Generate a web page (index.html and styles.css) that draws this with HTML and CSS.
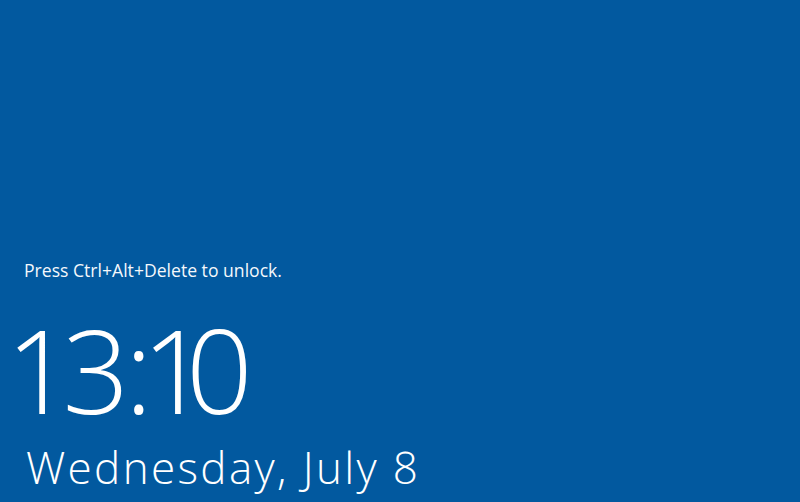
FILE: index.html
```html
<!DOCTYPE html>
<html>
<head>
<meta charset="utf-8">
<link rel="stylesheet" href="styles.css">
</head>
<body>
<main class="lock">
  <p class="hint">Press Ctrl+Alt+Delete to unlock.</p>
  <div class="time"><span class="d1">1</span><span class="d3">3</span><span class="colon">:</span><span class="d1b">1</span><span class="d0">0</span></div>
  <div class="date">Wednesday, July 8</div>
</main>
</body>
</html>
```
FILE: styles.css
```css
html, body {
  margin: 0;
  padding: 0;
  width: 800px;
  height: 502px;
  overflow: hidden;
  background: #02599f;
}
.lock {
  width: 800px;
  height: 502px;
  box-sizing: border-box;
  padding: 260px 0 0 24px;
  color: #ffffff;
  font-family: "Open Sans", "Noto Sans", sans-serif;
  display: flex;
  flex-direction: column;
}
.hint {
  margin: 0;
  font-size: 17.6px;
  line-height: 20px;
  font-weight: 400;
  color: #f4f8fc;
}
.time {
  display: flex;
  margin: 31px 0 0 -24px;
  font-size: 117px;
  line-height: 116px;
  font-weight: 300;
}
.time span {
  flex: none;
  white-space: nowrap;
}
.d1 { margin-left: 6px; letter-spacing: -10.4px; }
.d3 { letter-spacing: -4.4px; }
.colon { letter-spacing: -11px; }
.d1b { letter-spacing: -22.4px; }
.d0 { letter-spacing: 0; }
.date {
  margin: 10px 0 0 2px;
  font-size: 44px;
  line-height: 60px;
  font-weight: 300;
  letter-spacing: 2.35px;
}
```
